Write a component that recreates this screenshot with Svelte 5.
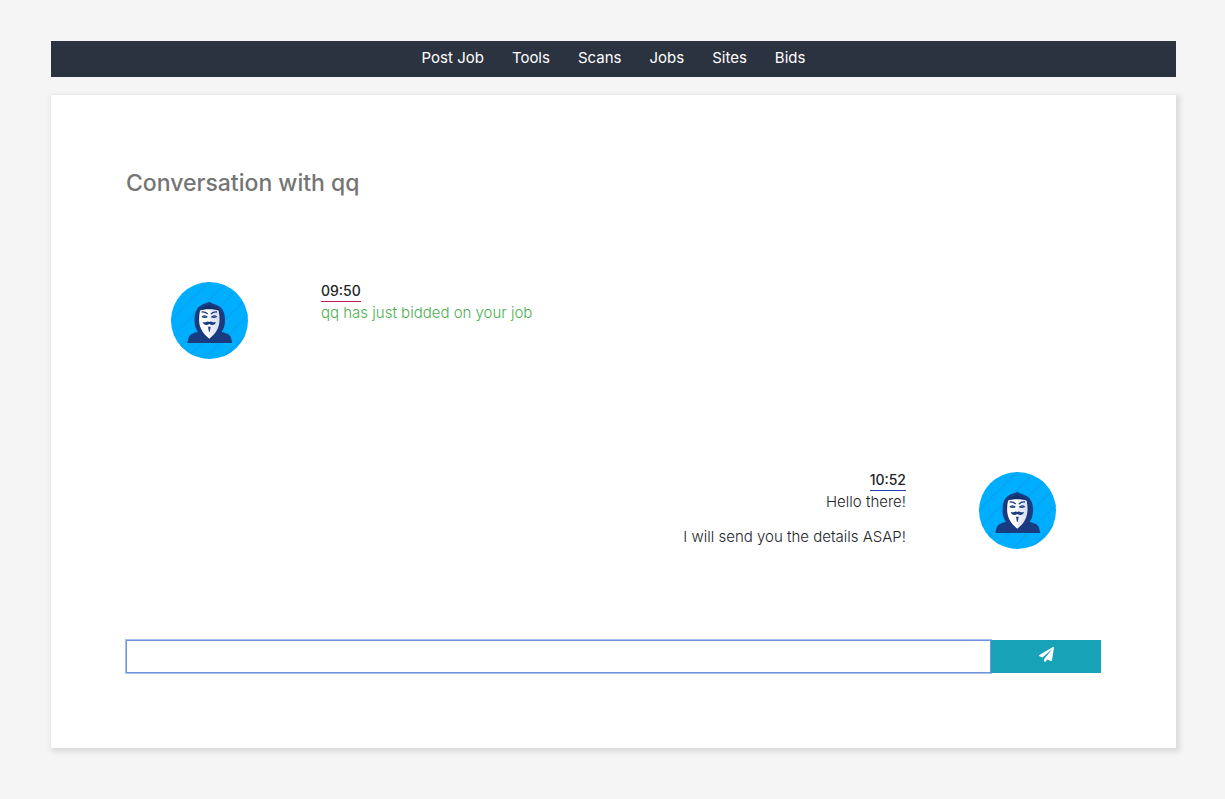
<script>
  const links = ['Post Job', 'Tools', 'Scans', 'Jobs', 'Sites', 'Bids'];
  const messages = [
    { mine: false, time: '09:50', lines: ['qq has just bidded on your job'] },
    { mine: true, time: '10:52', lines: ['Hello there!', 'I will send you the details ASAP!'] }
  ];
  let draft = $state('');
</script>

{#snippet avatar(id)}
  <svg class="avatar" viewBox="0 0 231 231" aria-hidden="true">
    <defs>
      <clipPath id="{id}-round"><circle cx="115.500" cy="115.500" r="115.500" /></clipPath>
      <linearGradient id="{id}-face" x1="0" x2="1" y1="0" y2="0">
        <stop offset="0.5" stop-color="#fff" />
        <stop offset="0.54" stop-color="#eceffa" />
        <stop offset="1" stop-color="#d8def0" />
      </linearGradient>
    </defs>
    <g clip-path="url(#{id}-round)">
      <rect width="231" height="231" fill="#00aeff" />
      <path d="M-20 80 80-20M-20 134 134-20M-20 188 188-20M-20 242 242-20M20 256 256 20M74 256 256 74M128 256 256 128" stroke="#05a4f4" stroke-width="5" />
      <path d="M115 59c-8 6-24 6-34 18-9 11-11 27-10 46 1 12 5 20 10 26-9 4-21 5-26 14-3 6-4 13-6 20h135c-2-7-3-14-6-20-5-9-17-10-26-14 6-7 9-17 10-28 1-18-2-34-12-44-10-10-26-11-35-18z" fill="#193c80" />
      <path d="M115 69c-9 6-20 6-27 14-6 8-8 20-6 34 3-9 2-20 6-30 6-7 48-7 54 0 4 10 3 21 6 30 2-14 0-26-6-34-7-8-18-8-27-14z" fill="#122f6b" />
      <path d="M87 86c8-6 48-6 56 0 4 19 4 39-3 54-5 11-15 22-25 30-10-8-20-19-25-30-7-15-7-35-3-54z" fill="url(#{id}-face)" />
      <path d="M92 90c8-1 14 2 18 6M138 90c-8-1-14 2-18 6M93 105q8-7 16 1M121 106q8-8 16-1" fill="none" stroke="#193c80" stroke-width="4" />
      <path d="M93 105q8-3 16 1-8 4-16-1zM121 106q8-4 16-1-8 5-16 1z" fill="#193c80" />
      <path d="M95 120c4 2 9 1 13-1 3-2 6 0 7 1 1-1 4-3 7-1 4 2 9 3 13 1-2 9-12 11-20 6-8 5-18 3-20-6z" fill="#193c80" />
      <path d="M111 134h8l-3 16h-2z" fill="#193c80" />
    </g>
  </svg>
{/snippet}

<div class="page">
  <nav>
    {#each links as link}<a href="#top">{link}</a>{/each}
  </nav>
  <main>
    <h1>Conversation with qq</h1>
    {#each messages as message, i}
      <article class:mine={message.mine}>
        {@render avatar(`avatar${i}`)}
        <div class="body">
          <time>{message.time}</time>
          {#each message.lines as line}<p>{line}</p>{/each}
        </div>
      </article>
    {/each}
    <form onsubmit={(event) => event.preventDefault()}>
      <input type="text" aria-label="Message" bind:value={draft} />
      <button type="submit" aria-label="Send">
        <svg viewBox="0 0 512 512" aria-hidden="true">
          <path d="M476 3.200 12.500 270.600c-18.100 10.400-15.800 35.600 2.200 43.200L121 358.400l287.300-253.200c5.500-4.900 13.300 2.600 8.600 8.300L176 407v80.500c0 23.600 28.500 32.900 42.500 15.800L282 426l124.600 52.200c14.200 6 30.400-2.900 33-18.200l72-432C515 7.800 493.300-6.800 476 3.200z" fill="currentColor" />
        </svg>
      </button>
    </form>
  </main>
</div>

<style>
  :global(body) {
    background: #f5f5f5;
  }
  .page {
    padding: 41px 49px 51px 51px;
    font: 400 15px/22px Inter, sans-serif;
    color: #212529;
  }
  nav {
    display: flex;
    flex-wrap: wrap;
    justify-content: center;
    gap: 28px;
    padding: 6px 0 8px;
    background: #2c3340;
  }
  nav a {
    color: #fff;
    text-decoration: none;
  }
  main {
    margin-top: 18px;
    padding: 75px;
    background: #fff;
    box-shadow: 2px 2px 5px 2px rgba(0, 0, 0, 0.1);
  }
  h1 {
    margin: 0 0 86px;
    font-size: 23px;
    line-height: 26px;
    font-weight: 500;
    color: #757575;
  }
  article {
    display: flex;
    align-items: flex-start;
    gap: 73px;
    min-height: 130px;
    margin-bottom: 60px;
    padding: 0 45px;
    font-weight: 300;
  }
  article.mine {
    flex-direction: row-reverse;
    min-height: 128px;
    margin-bottom: 40px;
    text-align: right;
  }
  .avatar {
    flex: none;
    width: 77px;
    height: 77px;
  }
  .body {
    display: flex;
    flex-direction: column;
    align-items: flex-start;
    margin-top: -2px;
    color: #4caf50;
  }
  .mine .body {
    align-items: flex-end;
    margin-top: -3px;
    color: #212529;
  }
  time {
    font-size: 14px;
    line-height: 21px;
    font-weight: 500;
    color: #212529;
    border-bottom: 1px solid #c2185b;
  }
  .mine time {
    border-color: #283db0;
  }
  p {
    margin: 0;
  }
  p + p {
    margin-top: 13px;
  }
  form {
    display: flex;
    height: 33px;
  }
  input {
    flex: 1;
    min-width: 0;
    box-sizing: border-box;
    padding: 0 8px;
    font: inherit;
    border: 1px solid #6f93dc;
    border-radius: 0;
    outline: 1px solid #a9c1f3;
    outline-offset: 0;
  }
  button {
    width: 110px;
    padding: 0 0 4px;
    border: 0;
    color: #fff;
    background: #17a2b8;
  }
  button svg {
    display: block;
    width: 15px;
    height: 15px;
    margin: 0 auto;
  }
</style>
